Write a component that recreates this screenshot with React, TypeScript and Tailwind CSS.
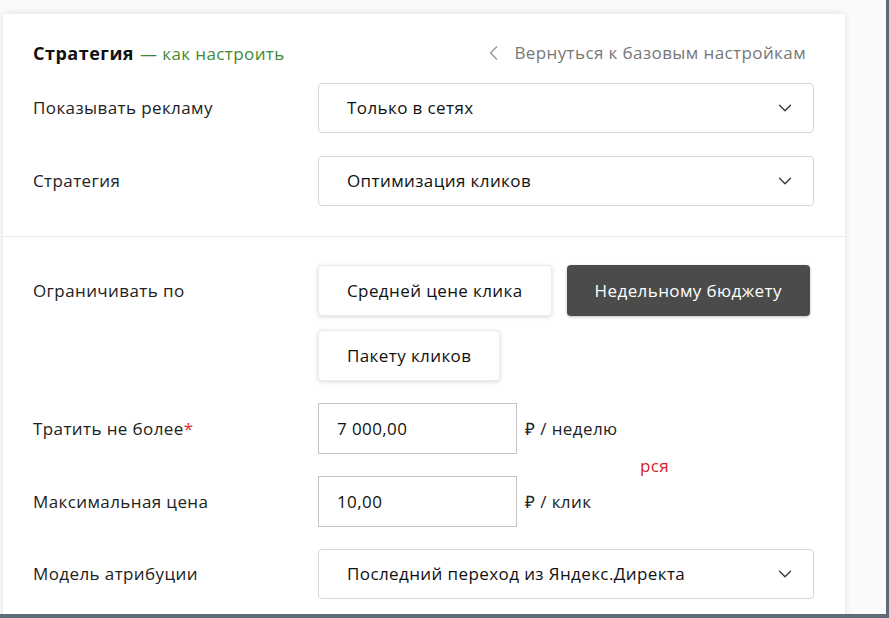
import { ChevronDown } from 'lucide-react';

const Row = ({ label, children }: { label: React.ReactNode; children: React.ReactNode }) => (
  <div className="flex items-center">
    <div className="w-[285px] shrink-0 text-[17px] text-[#222]">{label}</div>
    <div className="flex-1">{children}</div>
  </div>
);

const Select = ({ value }: { value: string }) => (
  <div className="flex h-[50px] w-[496px] items-center justify-between rounded-[4px] border border-[#d6d6d6] bg-white pl-[28px] pr-[17px] text-[17px] text-[#111]">
    <span>{value}</span>
    <ChevronDown className="h-[22px] w-[22px] text-[#333]" strokeWidth={1.4} />
  </div>
);

const Choice = ({ label, active = false }: { label: string; active?: boolean }) => (
  <button
    className={`h-[51px] rounded-[4px] px-[28px] text-[17px] tracking-[0.4px] ${
      active
        ? 'bg-[#4b4b4b] text-white shadow-[0_1px_3px_rgba(0,0,0,0.25)]'
        : 'border border-[#ececec] bg-white text-[#111] shadow-[0_1px_4px_rgba(0,0,0,0.15)]'
    }`}
  >
    {label}
  </button>
);

const Amount = ({ value, unit }: { value: string; unit: string }) => (
  <div className="flex items-center gap-[8px]">
    <div className="flex h-[51px] w-[199px] items-center border border-[#c4c4c4] bg-white pl-[18px] text-[17px] text-[#111]">
      {value}
    </div>
    <span className="text-[17px] text-[#222]">{unit}</span>
  </div>
);

export default function App() {
  return (
    <div className="relative h-[618px] w-[889px] overflow-hidden border-r-[3px] border-b-[4px] border-r-[#5d6b78] border-b-[#5d6b78] bg-[#fafafa] font-['Open_Sans','Liberation_Sans',sans-serif] tracking-[0.4px]">
      <div className="ml-[3px] mt-[14px] w-[842px] bg-white shadow-[0_0_6px_rgba(0,0,0,0.12)]">
        {/* top part */}
        <div className="px-[30px] pt-[26px] pb-[30px]">
          <div className="mb-[17px] flex h-[26px] items-center justify-between">
            <div className="flex items-baseline gap-[6px]">
              <span className="text-[18px] font-bold tracking-[0.5px] text-[#111]">Стратегия</span>
              <span className="text-[17px] text-[#3f8a34]">— как настроить</span>
            </div>
            <div className="mr-[9px] flex items-center gap-[15px] text-[17px] text-[#777]">
              <svg width="10" height="16" viewBox="0 0 10 16" fill="none" className="text-[#999]">
                <polyline points="8,1.5 1.5,8 8,14.5" stroke="currentColor" strokeWidth="1.4" />
              </svg>
              <span>Вернуться к базовым настройкам</span>
            </div>
          </div>
          <div className="flex flex-col gap-[23px]">
            <Row label="Показывать рекламу">
              <Select value="Только в сетях" />
            </Row>
            <Row label="Стратегия">
              <Select value="Оптимизация кликов" />
            </Row>
          </div>
        </div>

        <div className="border-t border-[#e6e6e6]" />

        {/* bottom part */}
        <div className="relative px-[30px] pt-[28px] pb-[30px]">
          <div className="flex">
            <div className="w-[285px] shrink-0 pt-[13px] text-[17px] text-[#222]">Ограничивать по</div>
            <div className="flex flex-col gap-[14px]">
              <div className="flex gap-[15px]">
                <Choice label="Средней цене клика" />
                <Choice label="Недельному бюджету" active />
              </div>
              <div className="flex">
                <Choice label="Пакету кликов" />
              </div>
            </div>
          </div>

          <div className="mt-[22px] flex flex-col gap-[22px]">
            <Row
              label={
                <>
                  Тратить не более<span className="text-[#e0282e]">*</span>
                </>
              }
            >
              <Amount value="7 000,00" unit="₽ / неделю" />
            </Row>
            <Row label="Максимальная цена">
              <Amount value="10,00" unit="₽ / клик" />
            </Row>
            <Row label="Модель атрибуции">
              <Select value="Последний переход из Яндекс.Директа" />
            </Row>
          </div>

          <span className="absolute left-[637px] top-[216px] text-[17px] text-[#d8232a]">рся</span>
        </div>
      </div>
    </div>
  );
}
